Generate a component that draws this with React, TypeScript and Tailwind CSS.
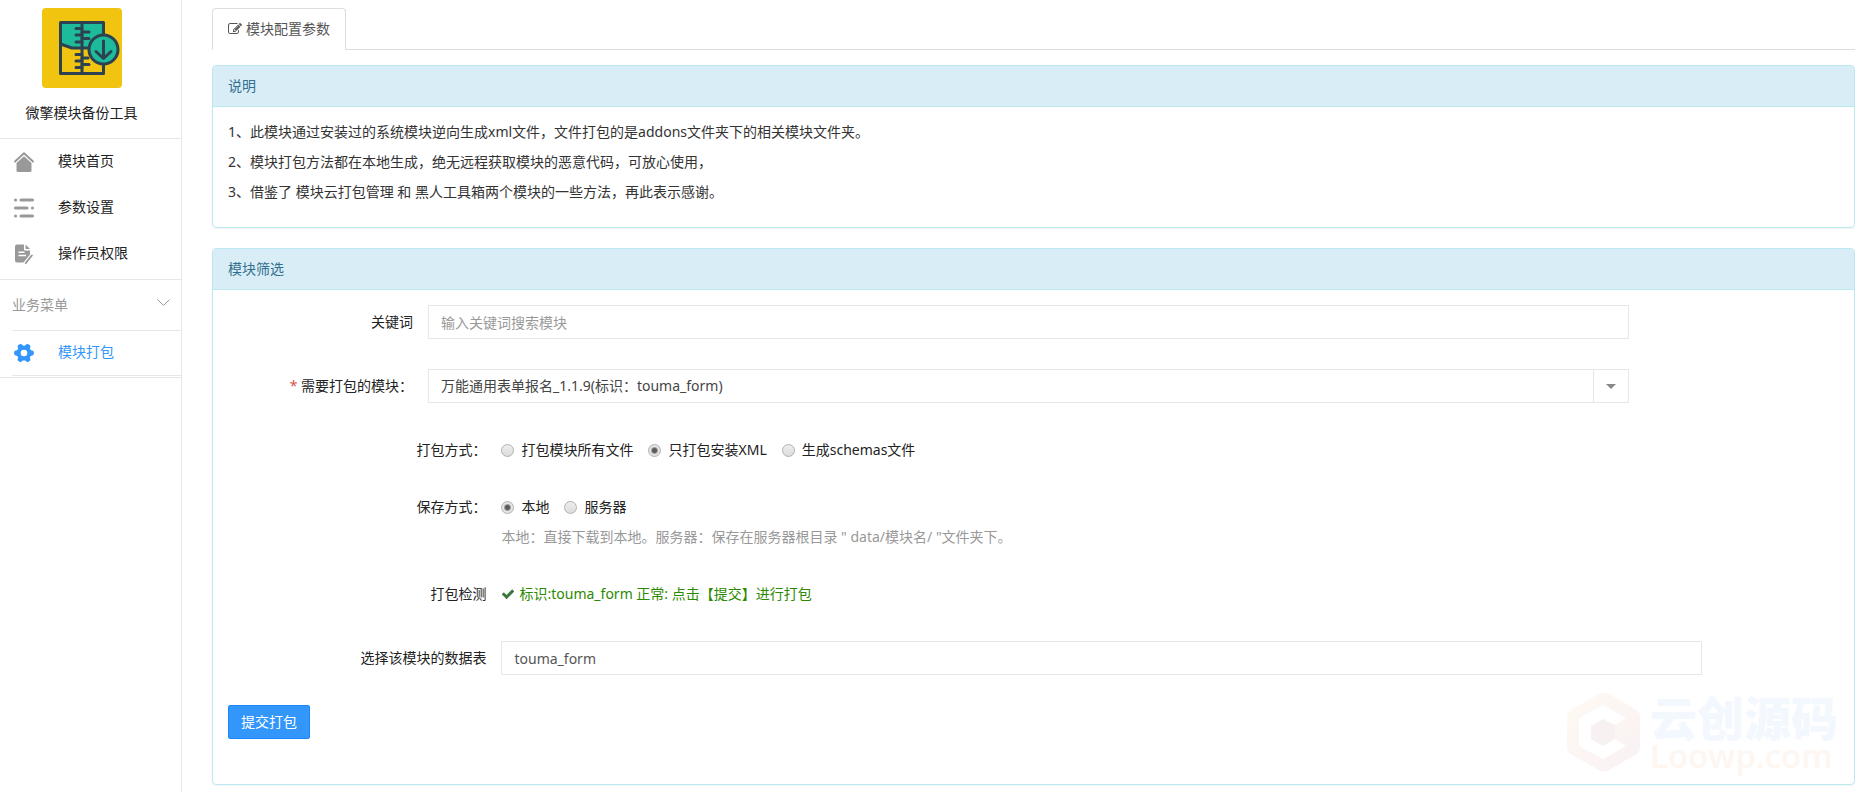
import { useState } from 'react';
import type { ReactNode } from 'react';

const packModes = [
  { value: 'all', label: '打包模块所有文件' },
  { value: 'xml', label: '只打包安装XML' },
  { value: 'schemas', label: '生成schemas文件' },
];

const saveModes = [
  { value: 'local', label: '本地' },
  { value: 'server', label: '服务器' },
];

function ModuleLogo() {
  return (
    <svg className="w-20 h-20" viewBox="0 0 80 80" fill="none" stroke="#2c4250" strokeWidth={3} strokeLinejoin="round">
      <rect width="80" height="80" rx="4" fill="#f1c40f" stroke="none" />
      <path d="M18.500 14.500H61.500V40H30L18.500 36Z" fill="#1dbb9b" stroke="none" />
      <path d="M18.500 14.500H61.500V65.500H18.500Z" />
      <path d="M18.500 36L30 40H48" />
      <path d="M40 14.500V65.500" />
      <path
        d="M34 20.500H40M34 27H40M34 34H40M40 24H47M40 30.500H47M34 46.500H40M34 53H40M34 59.500H40M40 50H46M40 56.500H47"
        strokeLinecap="round"
      />
      <circle cx="61.500" cy="41.500" r="14.500" fill="#1dbb9b" />
      <path d="M61.500 33V50M54 43.500L61.500 50.500L69 43.500" strokeLinecap="round" />
    </svg>
  );
}

function HomeIcon() {
  return (
    <svg className="w-5 h-5" viewBox="0 0 20 20" fill="#999">
      <path d="M1 9.500L10 1.200L19 9.500" fill="none" stroke="#999" strokeWidth={2} strokeLinecap="round" strokeLinejoin="round" />
      <path d="M10 4.300L17.500 11V18.500Q17.500 20 16 20H4Q2.500 20 2.500 18.500V11Z" />
    </svg>
  );
}

function ListIcon() {
  return (
    <svg className="w-5 h-5" viewBox="0 0 20 20" stroke="#999" strokeWidth={3} strokeLinecap="round">
      <path d="M1.500 2H1.600M7 2H18.500M1.500 10H13M18.400 10H18.500M1.500 18H1.600M7 18H18.500" />
    </svg>
  );
}

function PermissionIcon() {
  return (
    <svg className="w-5 h-5" viewBox="0 0 20 20" fill="#999">
      <path d="M3 0.500H10V5.500Q10 6.500 11 6.500H16V10.500L9.500 18.500H3Q1 18.500 1 16.500V2.500Q1 0.500 3 0.500Z" />
      <path d="M11.500 0.500L16 5H11.500Z" />
      <path d="M4.500 8.200H10.500M4.500 11.500H12" stroke="#fff" strokeWidth={1.500} />
      <path d="M17.800 11.500L11.800 19" stroke="#999" strokeWidth={2} strokeLinecap="round" />
    </svg>
  );
}

function GearIcon() {
  return (
    <svg className="w-5 h-5" viewBox="0 0 20 20">
      <circle cx="10" cy="10" r="7.400" fill="#3296fa" />
      <path
        d="M2.800 10H17.200M6.400 3.800L13.600 16.200M13.600 3.800L6.400 16.200"
        stroke="#3296fa"
        strokeWidth={5.400}
        strokeLinecap="round"
      />
      <circle cx="10" cy="10" r="3.300" fill="#fff" />
    </svg>
  );
}

function EditIcon() {
  return (
    <svg className="h-4 w-[14px]" viewBox="0 0 1792 1792" fill="currentColor">
      <path d="M888 1184l116-116-152-152-116 116v56h96v96h56zm440-720q-16-16-33 1l-350 350q-17 17-1 33t33-1l350-350q17-17 1-33zm80 594v190q0 119-84.500 203.500t-203.500 84.500h-832q-119 0-203.500-84.500t-84.500-203.500v-832q0-119 84.500-203.500t203.500-84.500h832q63 0 117 25 15 7 18 23 3 17-9 29l-49 49q-14 14-32 8-23-6-45-6h-832q-66 0-113 47t-47 113v832q0 66 47 113t113 47h832q66 0 113-47t47-113v-126q0-13 9-22l64-64q15-15 35-7t20 29zm-96-738l288 288-672 672h-288v-288zm444 132l-92 92-288-288 92-92q28-28 68-28t68 28l152 152q28 28 28 68t-28 68z" />
    </svg>
  );
}

function CheckIcon() {
  return (
    <svg className="h-[14px] w-[14px]" viewBox="0 0 1792 1792" fill="#3c763d">
      <path d="M1671 566q0 40-28 68l-724 724-136 136q-28 28-68 28t-68-28l-136-136-362-362q-28-28-28-68t28-68l136-136q28-28 68-28t68 28l294 295 656-657q28-28 68-28t68 28l136 136q28 28 28 68z" />
    </svg>
  );
}

function NavItem({ icon, label, active }: { icon: ReactNode; label: string; active?: boolean }) {
  return (
    <a
      href="#"
      className={`flex items-center gap-6 pl-[14px] ${active ? 'h-11 text-[#3296fa]' : 'h-[46px] text-[#222]'}`}
    >
      {icon}
      <span className="pb-[2px]">{label}</span>
    </a>
  );
}

function Panel({ title, children }: { title: string; children: ReactNode }) {
  return (
    <section className="mb-5 rounded border border-[#bce8f1] shadow-xs">
      <h2 className="rounded-t-[3px] border-b border-[#bce8f1] bg-[#d9edf7] px-[15px] py-[10px] text-[#31708f]">
        {title}
      </h2>
      {children}
    </section>
  );
}

interface RowProps {
  label: ReactNode;
  htmlFor?: string;
  narrow?: boolean;
  children: ReactNode;
}

function Row({ label, htmlFor, narrow, children }: RowProps) {
  const labelClass = `shrink-0 pt-[7px] text-right ${narrow ? 'w-[200px]' : 'w-2/12'}`;

  return (
    <div className="-mx-[15px] mb-[30px] flex">
      {htmlFor ? (
        <label htmlFor={htmlFor} className={labelClass}>
          {label}
        </label>
      ) : (
        <div className={labelClass}>{label}</div>
      )}
      <div className="w-9/12 px-[15px]">{children}</div>
    </div>
  );
}

interface RadioGroupProps {
  name: string;
  label: string;
  options: { value: string; label: string }[];
  value: string;
  onChange: (value: string) => void;
}

function RadioGroup({ name, label, options, value, onChange }: RadioGroupProps) {
  return (
    <div role="radiogroup" aria-label={label} className="flex gap-[15px] pt-[7px]">
      {options.map((option) => (
        <label key={option.value} className="flex items-center gap-[7px]">
          <input
            type="radio"
            name={name}
            checked={value === option.value}
            onChange={() => onChange(option.value)}
            className="h-[13px] w-[13px] appearance-none rounded-full border border-[#b0b0b0] bg-linear-to-b from-[#eee] to-[#dcdcdc] checked:bg-[radial-gradient(circle,#5c5c5c_0_2px,#e4e4e4_4px)]"
          />
          {option.label}
        </label>
      ))}
    </div>
  );
}

function Watermark() {
  return (
    <div className="pointer-events-none absolute right-4 bottom-3 flex items-center gap-2 select-none" aria-hidden="true">
      <svg className="h-20 w-[76px]" viewBox="0 0 76 80">
        <defs>
          <linearGradient id="hex" x1="0" y1="0" x2="1" y2="1">
            <stop offset="0" stopColor="#fffaf3" />
            <stop offset="1" stopColor="#f9f1f3" />
          </linearGradient>
        </defs>
        <path d="M33 2Q38 -1 43 2L69 17Q74 20 74 25V55Q74 60 69 63L43 78Q38 81 33 78L6 63Q1 60 1 55V25Q1 20 6 17Z" fill="url(#hex)" />
        <path d="M35 14Q37 13 39 14L60 26L49 33L37 27L25 34V47L37 54L49 47L60 54L39 66Q37 67.500 35 66L15 55Q13 54 13 52V28Q13 26 15 25Z" fill="#fff" />
        <path d="M37 27L49 33V47L37 54L25 47V34Z" fill="#f8f1f2" />
      </svg>
      <div>
        <div className="text-[47px] leading-[48px] font-black text-[#f3f7fe]">云创源码</div>
        <div className="font-['Open_Sans'] text-[33px] leading-[28px] font-semibold text-[#fef6f0]">Loowp.com</div>
      </div>
    </div>
  );
}

export default function App() {
  const [keyword, setKeyword] = useState('');
  const [packMode, setPackMode] = useState('xml');
  const [saveMode, setSaveMode] = useState('local');
  const [table, setTable] = useState('touma_form');

  return (
    <div className="flex min-h-screen bg-white font-['Noto_Sans','Noto_Sans_CJK_SC',sans-serif] text-sm text-[#222]">
      {/* Sidebar */}
      <aside className="w-[182px] shrink-0 border-r border-[#e7e7eb]">
        <div className="flex h-[139px] flex-col items-center border-b border-[#e7e7eb] pt-2 pr-[18px]">
          <ModuleLogo />
          <h1 className="mt-[15px]">微擎模块备份工具</h1>
        </div>
        <nav className="border-b border-[#e7e7eb] pb-[2px]">
          <NavItem icon={<HomeIcon />} label="模块首页" />
          <NavItem icon={<ListIcon />} label="参数设置" />
          <NavItem icon={<PermissionIcon />} label="操作员权限" />
        </nav>
        <button
          type="button"
          className="ml-3 flex h-[51px] w-[169px] items-center justify-between border-b border-[#e7e7eb] pr-[11px] text-[#999]"
        >
          业务菜单
          <svg className="mb-1 h-2 w-[13px]" viewBox="0 0 13 8" fill="none" stroke="#999">
            <path d="M0.500 0.500L6.500 6.500L12.500 0.500" />
          </svg>
        </button>
        <nav className="border-b border-[#e7e7eb] pb-px">
          <NavItem icon={<GearIcon />} label="模块打包" active />
          <hr className="ml-3 border-[#e7e7eb]" />
        </nav>
      </aside>

      <main className="min-w-0 flex-1 pt-2 pl-[30px]">
        {/* Tabs */}
        <div className="mb-[15px] flex h-[42px] border-b border-[#ddd]">
          <a
            href="#"
            className="-mb-px flex items-center gap-1 rounded-t border border-[#ddd] border-b-white bg-white px-[15px] text-[#555]"
          >
            <EditIcon />
            模块配置参数
          </a>
        </div>

        <Panel title="说明">
          <div className="px-[15px] pt-[10px] pb-5 leading-[30px] text-[#333]">
            <p>1、此模块通过安装过的系统模块逆向生成xml文件，文件打包的是addons文件夹下的相关模块文件夹。</p>
            <p>2、模块打包方法都在本地生成，绝无远程获取模块的恶意代码，可放心使用，</p>
            <p>3、借鉴了 模块云打包管理 和 黑人工具箱两个模块的一些方法，再此表示感谢。</p>
          </div>
        </Panel>

        <Panel title="模块筛选">
          <form className="relative p-[15px]" onSubmit={(e) => e.preventDefault()}>
            <Watermark />
            <Row label="关键词" htmlFor="keyword" narrow>
              <input
                id="keyword"
                type="text"
                value={keyword}
                onChange={(e) => setKeyword(e.target.value)}
                placeholder="输入关键词搜索模块"
                className="h-[34px] w-full border border-[#e7e7eb] px-3 text-[#555] placeholder:text-[#999]"
              />
            </Row>
            <Row
              label={
                <>
                  <span className="text-[#d9534f]">*</span> 需要打包的模块：
                </>
              }
              htmlFor="module"
              narrow
            >
              <div className="relative">
                <select id="module" className="h-[34px] w-full appearance-none border border-[#e7e7eb] pr-12 pl-3 text-[#444]">
                  <option>万能通用表单报名_1.1.9(标识：touma_form)</option>
                </select>
                <span className="pointer-events-none absolute inset-y-0 right-0 flex w-9 items-center justify-center border-l border-[#e7e7eb]">
                  <svg className="h-[5px] w-[10px]" viewBox="0 0 10 5" fill="#888">
                    <path d="M0 0H10L5 5Z" />
                  </svg>
                </span>
              </div>
            </Row>
            <Row label="打包方式：">
              <RadioGroup name="packMode" label="打包方式" options={packModes} value={packMode} onChange={setPackMode} />
            </Row>
            <Row label="保存方式：">
              <RadioGroup name="saveMode" label="保存方式" options={saveModes} value={saveMode} onChange={setSaveMode} />
              <p className="mt-[10px] text-[#999]">
                本地：直接下载到本地。服务器：保存在服务器根目录 " data/模块名/ "文件夹下。
              </p>
            </Row>
            <Row label="打包检测">
              <p className="flex h-[34px] items-center gap-1 text-[#2b8a00]">
                <CheckIcon />
                标识:touma_form 正常: 点击【提交】进行打包
              </p>
            </Row>
            <Row label="选择该模块的数据表" htmlFor="table">
              <input
                id="table"
                type="text"
                value={table}
                onChange={(e) => setTable(e.target.value)}
                className="h-[34px] w-full border border-[#e7e7eb] px-3 text-[#555]"
              />
            </Row>
            <button
              type="submit"
              className="mb-[30px] block h-[34px] rounded-xs border border-[#1989fa] bg-[#3296fa] px-3 text-white"
            >
              提交打包
            </button>
          </form>
        </Panel>
      </main>
    </div>
  );
}
